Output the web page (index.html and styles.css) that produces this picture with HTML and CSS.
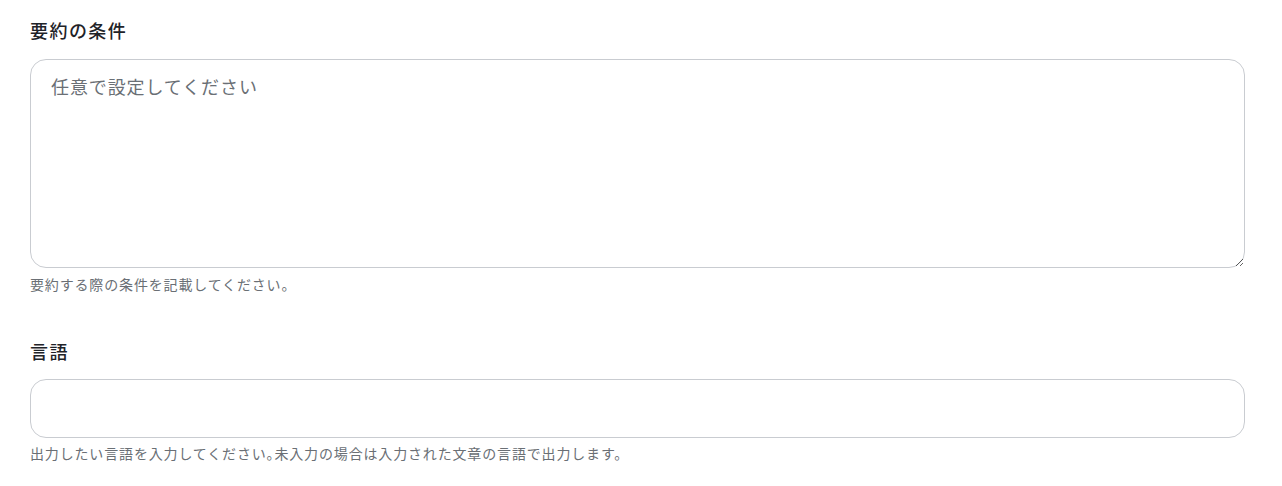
FILE: index.html
```html
<!DOCTYPE html>
<html lang="ja">
<head>
    <meta charset="UTF-8">
    <meta name="viewport" content="width=device-width, initial-scale=1.0">
    <title>要約の設定</title>
    <link rel="stylesheet" href="styles.css">
</head>
<body>
    <div class="form">
        <div class="field">
            <label class="field-label" for="condition">要約の条件</label>
            <textarea id="condition" class="field-textarea" placeholder="任意で設定してください"></textarea>
            <p class="field-help">要約する際の条件を記載してください。</p>
        </div>

        <div class="field">
            <label class="field-label" for="language">言語</label>
            <input type="text" id="language" class="field-input">
            <p class="field-help">出力したい言語を入力してください。未入力の場合は入力された文章の言語で出力します。</p>
        </div>
    </div>
</body>
</html>
```

FILE: styles.css
```css
body {
    font-family: Roboto, "Noto Sans CJK JP", sans-serif;
    margin: 0;
    padding: 0;
    background-color: #fff;
    color: #1f2328;
    font-feature-settings: "halt";
}

.form {
    padding: 20px 37px 0 30px;
}

.field {
    margin-bottom: 46px;
}

.field:last-child {
    margin-bottom: 0;
}

.field-label {
    display: block;
    font-size: 18px;
    font-weight: 500;
    line-height: 24px;
    letter-spacing: 0.08em;
    margin-bottom: 15px;
}

.field-textarea, .field-input {
    display: block;
    box-sizing: border-box;
    width: 100%;
    border: 1px solid #c9ccd1;
    border-radius: 16px;
    background: #fff;
    font-family: inherit;
    font-size: 18px;
    letter-spacing: 0.05em;
    color: #333;
    outline: none;
}

.field-textarea {
    height: 209px;
    padding: 14px 20px;
    line-height: 1.5;
    resize: vertical;
}

.field-textarea::placeholder {
    color: #6a6f75;
}

.field-input {
    height: 59px;
    padding: 0 20px;
}

.field + .field .field-label {
    margin-bottom: 14px;
}

.field-help {
    margin: 7px 0 0;
    font-size: 14px;
    line-height: 20px;
    letter-spacing: 0.06em;
    color: #6a6f75;
}

.field + .field .field-help {
    margin-top: 6px;
}
```
